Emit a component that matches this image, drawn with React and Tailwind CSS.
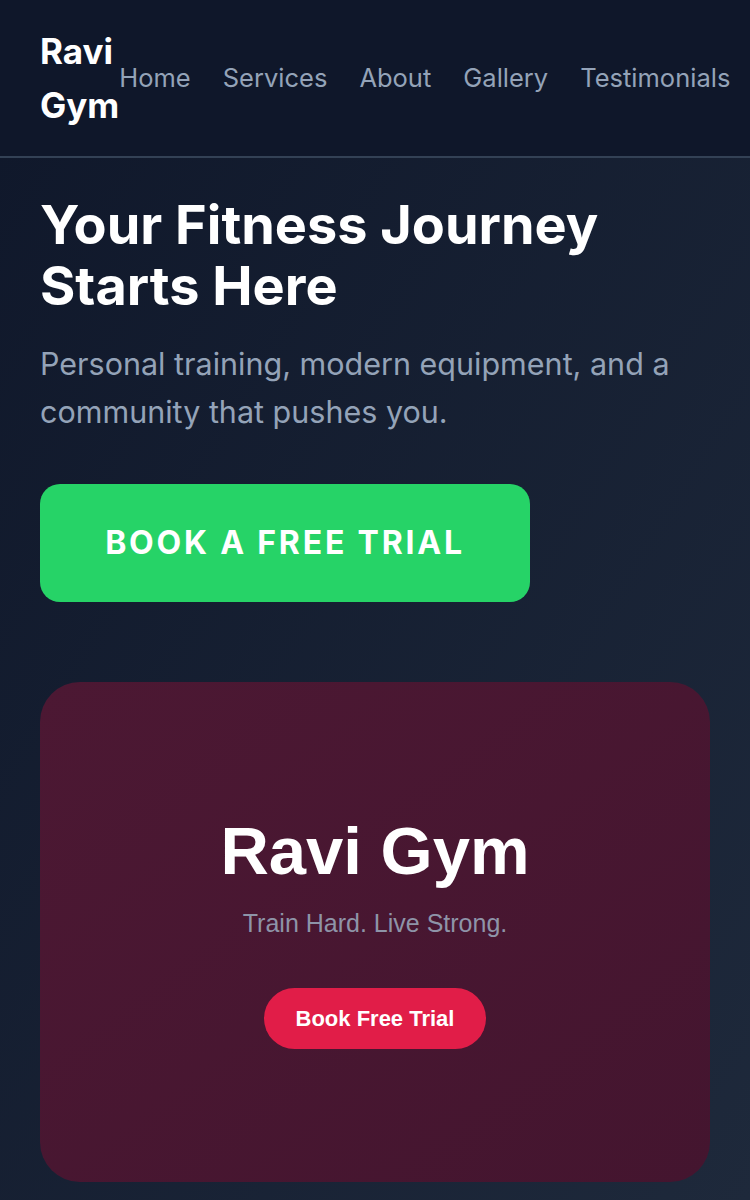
export default function App() {
  const links = ["Home", "Services", "About", "Gallery", "Testimonials"];
  return (
    <div
      className="min-h-[1200px] bg-gradient-to-br from-[#0f172a] to-[#1e293b] text-white"
      style={{ fontFamily: "Inter, 'Noto Sans', sans-serif" }}
    >
      <header className="flex items-center justify-between px-10 py-6 border-b-2 border-[#334155] bg-[#0f172a]">
        <div className="text-[35px] leading-[54px] font-bold text-white">Ravi Gym</div>
        <nav className="flex gap-[32px]">
          {links.map((l) => (
            <a key={l} className="whitespace-nowrap text-[25.5px] leading-[32px] text-[#94a3b8]">
              {l}
            </a>
          ))}
        </nav>
      </header>
      <section className="px-10 pt-[36px]">
        <h1 className="text-[54px] leading-[61px] font-bold text-white">
          Your Fitness Journey
          <br />
          Starts Here
        </h1>
        <p className="mt-[24px] text-[30.5px] leading-[48px] text-[#94a3b8]">
          Personal training, modern equipment, and a community that pushes you.
        </p>
        <button className="mt-[48px] w-[490px] h-[118px] rounded-[20px] bg-[#26d367] text-[32px] font-bold tracking-[2.8px] text-white">
          BOOK A FREE TRIAL
        </button>
        <div
          className="mt-[80px] h-[500px] w-[670px] rounded-[40px] bg-gradient-to-br from-[#4c1833] to-[#44152f] flex flex-col items-center justify-center"
          style={{ fontFamily: "'Liberation Sans', Arial, sans-serif" }}
        >
          <div className="text-[67px] leading-[72px] font-bold text-white">Ravi Gym</div>
          <div className="mt-[21px] text-[25px] leading-[30px] text-[#8e94a8]">Train Hard. Live Strong.</div>
          <button className="mt-[50px] h-[61px] px-[32px] rounded-full bg-[#e11d48] text-[22px] font-bold text-white">
            Book Free Trial
          </button>
        </div>
      </section>
    </div>
  );
}
